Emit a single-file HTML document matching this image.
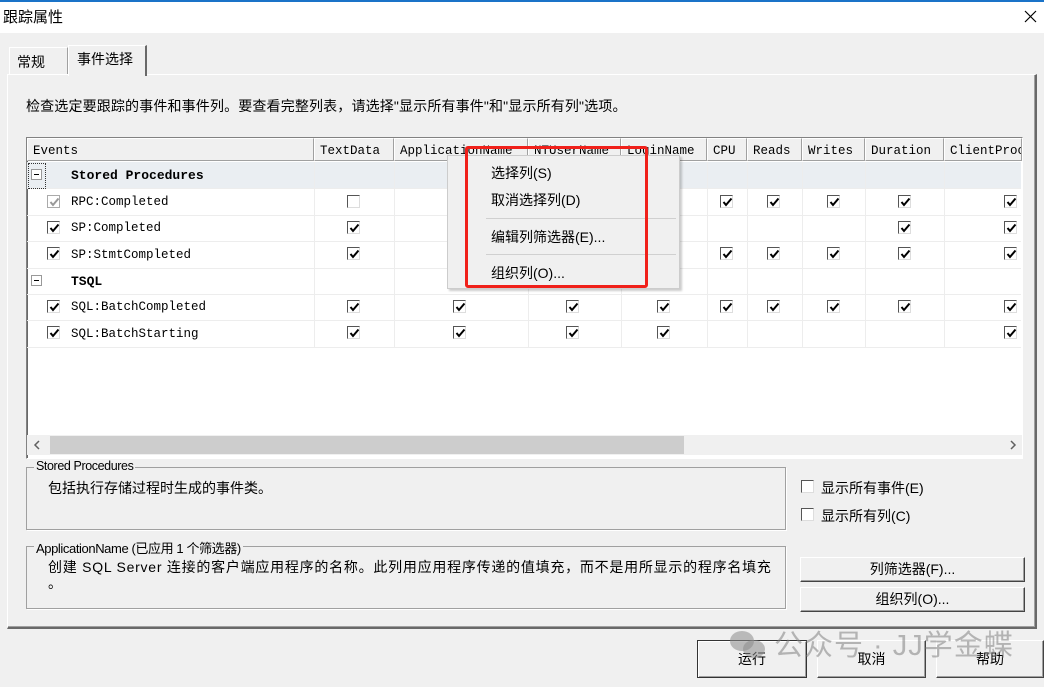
<!DOCTYPE html>
<html><head><meta charset="utf-8"><style>
*{box-sizing:border-box;margin:0;padding:0}
body{width:1044px;height:687px;background:#f0f0f0;position:relative;overflow:hidden;font-family:"Liberation Sans","Noto Sans CJK SC",sans-serif;font-size:13px;color:#000}
.a{position:absolute}
.mono{font-family:"Liberation Mono","Noto Sans CJK SC",monospace;font-size:12.5px}
.hd{position:absolute;top:138px;height:23px;background:#f0f0f0;border:1px solid #fff;border-right-color:#a0a0a0;border-bottom-color:#a0a0a0;line-height:24px;padding-left:5px;white-space:nowrap;overflow:hidden}
.cb{position:absolute;width:13px;height:13px;border:1px solid #555;border-right-color:#ddd;border-bottom-color:#ddd;background:#fff}
.cb svg{position:absolute;left:1px;top:1px}
.btn{position:absolute;background:#f0f0f0;border:1px solid #fff;border-right-color:#444;border-bottom-color:#444;box-shadow:inset -1px -1px 0 #a0a0a0;text-align:center}
.gb{position:absolute;border:1px solid #a0a0a0;box-shadow:1px 1px 0 #fff}
.hl{position:absolute;left:27px;width:994px;height:1px;background:#ededed}
.vl{position:absolute;top:162px;height:185px;width:1px;background:#ededed}
</style></head><body>
<div class="a" style="left:0;top:0;width:1044px;height:2px;background:#1a73c8"></div>
<div class="a" style="left:0;top:2px;width:1044px;height:31px;background:#fff"></div>
<div class="a" style="left:3px;top:6px;font-size:15px">跟踪属性</div>
<svg class="a" style="left:1024px;top:10px" width="13" height="13"><path d="M1 1L12 12M12 1L1 12" stroke="#000" stroke-width="1.2"/></svg>

<div class="a" style="left:9px;top:47px;width:59px;height:28px;border:1px solid #fff;border-right-color:#a0a0a0;border-bottom:none;background:#f0f0f0"></div>
<div class="a" style="left:17px;top:52px;font-size:14px">常规</div>
<div class="a" style="left:7px;top:74px;width:1030px;height:555px;border:1px solid #fff;border-right:2px solid #696969;border-bottom:2px solid #696969;box-shadow:inset -1px -1px 0 #a0a0a0"></div>
<div class="a" style="left:68px;top:45px;width:79px;height:31px;border:1px solid #fff;border-right:2px solid #696969;border-bottom:none;background:#f0f0f0"></div>
<div class="a" style="left:77px;top:49px;font-size:14px">事件选择</div>

<div class="a" style="left:26px;top:96px;font-size:14px;letter-spacing:0.15px">检查选定要跟踪的事件和事件列。要查看完整列表，请选择"显示所有事件"和"显示所有列"选项。</div>

<div class="a" style="left:26px;top:137px;width:997px;height:322px;background:#fff;border:1px solid #828282;border-right-color:#fff;border-bottom-color:#fff;box-shadow:inset 1px 1px 0 #696969"></div>
<div class="a" style="left:27px;top:162px;width:994px;height:26px;background:#eaeef2"></div>
<div class="mono">
<div class="hd" style="left:27px;width:287px">Events</div>
<div class="hd" style="left:314px;width:80px">TextData</div>
<div class="hd" style="left:394px;width:134px">ApplicationName</div>
<div class="hd" style="left:528px;width:93px">NTUserName</div>
<div class="hd" style="left:621px;width:86px">LoginName</div>
<div class="hd" style="left:707px;width:40px">CPU</div>
<div class="hd" style="left:747px;width:55px">Reads</div>
<div class="hd" style="left:802px;width:63px">Writes</div>
<div class="hd" style="left:865px;width:79px">Duration</div>
<div class="hd" style="left:944px;width:78px">ClientProc</div>
</div>
<div class="hl" style="top:188px"></div><div class="hl" style="top:215px"></div><div class="hl" style="top:241px"></div><div class="hl" style="top:268px"></div><div class="hl" style="top:294px"></div><div class="hl" style="top:320px"></div><div class="hl" style="top:347px"></div>
<div class="vl" style="left:314px"></div><div class="vl" style="left:394px"></div><div class="vl" style="left:528px"></div><div class="vl" style="left:621px"></div><div class="vl" style="left:707px"></div><div class="vl" style="left:747px"></div><div class="vl" style="left:802px"></div><div class="vl" style="left:865px"></div><div class="vl" style="left:944px"></div>

<div class="a" style="left:28px;top:163px;width:18px;height:26px;border:1px dotted #333"></div>
<div class="a" style="left:31px;top:169px;width:11px;height:11px;border:1px solid #999;background:#fff"><div class="a" style="left:2px;top:4px;width:5px;height:1px;background:#000"></div></div>
<div class="a" style="left:31px;top:275px;width:11px;height:11px;border:1px solid #999;background:#fff"><div class="a" style="left:2px;top:4px;width:5px;height:1px;background:#000"></div></div>
<div class="mono a" style="left:71px;top:168px;font-weight:bold;font-size:13px">Stored Procedures</div>
<div class="mono a" style="left:71px;top:195px">RPC:Completed</div>
<div class="mono a" style="left:71px;top:221px">SP:Completed</div>
<div class="mono a" style="left:71px;top:248px">SP:StmtCompleted</div>
<div class="mono a" style="left:71px;top:274px;font-weight:bold;font-size:13px">TSQL</div>
<div class="mono a" style="left:71px;top:300px">SQL:BatchCompleted</div>
<div class="mono a" style="left:71px;top:327px">SQL:BatchStarting</div>

<svg width="0" height="0" style="position:absolute"><defs><path id="ck" d="M1.5 5L4 8L9.5 1.5" fill="none" stroke-width="2"/></defs></svg>
<div class="cb" style="left:47px;top:195px;border-color:#aaa"><svg width="11" height="11"><use href="#ck" stroke="#999"/></svg></div>
<div class="cb" style="left:347px;top:195px"></div>
<div class="cb" style="left:720px;top:195px"><svg width="11" height="11"><use href="#ck" stroke="#000"/></svg></div>
<div class="cb" style="left:767px;top:195px"><svg width="11" height="11"><use href="#ck" stroke="#000"/></svg></div>
<div class="cb" style="left:827px;top:195px"><svg width="11" height="11"><use href="#ck" stroke="#000"/></svg></div>
<div class="cb" style="left:898px;top:195px"><svg width="11" height="11"><use href="#ck" stroke="#000"/></svg></div>
<div class="cb" style="left:1004px;top:195px"><svg width="11" height="11"><use href="#ck" stroke="#000"/></svg></div>

<div class="cb" style="left:47px;top:221px"><svg width="11" height="11"><use href="#ck" stroke="#000"/></svg></div>
<div class="cb" style="left:347px;top:221px"><svg width="11" height="11"><use href="#ck" stroke="#000"/></svg></div>
<div class="cb" style="left:898px;top:221px"><svg width="11" height="11"><use href="#ck" stroke="#000"/></svg></div>
<div class="cb" style="left:1004px;top:221px"><svg width="11" height="11"><use href="#ck" stroke="#000"/></svg></div>

<div class="cb" style="left:47px;top:247px"><svg width="11" height="11"><use href="#ck" stroke="#000"/></svg></div>
<div class="cb" style="left:347px;top:247px"><svg width="11" height="11"><use href="#ck" stroke="#000"/></svg></div>
<div class="cb" style="left:720px;top:247px"><svg width="11" height="11"><use href="#ck" stroke="#000"/></svg></div>
<div class="cb" style="left:767px;top:247px"><svg width="11" height="11"><use href="#ck" stroke="#000"/></svg></div>
<div class="cb" style="left:827px;top:247px"><svg width="11" height="11"><use href="#ck" stroke="#000"/></svg></div>
<div class="cb" style="left:898px;top:247px"><svg width="11" height="11"><use href="#ck" stroke="#000"/></svg></div>
<div class="cb" style="left:1004px;top:247px"><svg width="11" height="11"><use href="#ck" stroke="#000"/></svg></div>

<div class="cb" style="left:47px;top:300px"><svg width="11" height="11"><use href="#ck" stroke="#000"/></svg></div>
<div class="cb" style="left:347px;top:300px"><svg width="11" height="11"><use href="#ck" stroke="#000"/></svg></div>
<div class="cb" style="left:453px;top:300px"><svg width="11" height="11"><use href="#ck" stroke="#000"/></svg></div>
<div class="cb" style="left:566px;top:300px"><svg width="11" height="11"><use href="#ck" stroke="#000"/></svg></div>
<div class="cb" style="left:657px;top:300px"><svg width="11" height="11"><use href="#ck" stroke="#000"/></svg></div>
<div class="cb" style="left:720px;top:300px"><svg width="11" height="11"><use href="#ck" stroke="#000"/></svg></div>
<div class="cb" style="left:767px;top:300px"><svg width="11" height="11"><use href="#ck" stroke="#000"/></svg></div>
<div class="cb" style="left:827px;top:300px"><svg width="11" height="11"><use href="#ck" stroke="#000"/></svg></div>
<div class="cb" style="left:898px;top:300px"><svg width="11" height="11"><use href="#ck" stroke="#000"/></svg></div>
<div class="cb" style="left:1004px;top:300px"><svg width="11" height="11"><use href="#ck" stroke="#000"/></svg></div>

<div class="cb" style="left:47px;top:326px"><svg width="11" height="11"><use href="#ck" stroke="#000"/></svg></div>
<div class="cb" style="left:347px;top:326px"><svg width="11" height="11"><use href="#ck" stroke="#000"/></svg></div>
<div class="cb" style="left:453px;top:326px"><svg width="11" height="11"><use href="#ck" stroke="#000"/></svg></div>
<div class="cb" style="left:566px;top:326px"><svg width="11" height="11"><use href="#ck" stroke="#000"/></svg></div>
<div class="cb" style="left:657px;top:326px"><svg width="11" height="11"><use href="#ck" stroke="#000"/></svg></div>
<div class="cb" style="left:1004px;top:326px"><svg width="11" height="11"><use href="#ck" stroke="#000"/></svg></div>

<div class="a" style="left:27px;top:435px;width:995px;height:20px;background:#f0f0f0"></div>
<div class="a" style="left:50px;top:436px;width:634px;height:18px;background:#cdcdcd"></div>
<svg class="a" style="left:33px;top:440px" width="8" height="10"><path d="M6 1L2 5L6 9" fill="none" stroke="#606060" stroke-width="1.5"/></svg>
<svg class="a" style="left:1009px;top:440px" width="8" height="10"><path d="M2 1L6 5L2 9" fill="none" stroke="#606060" stroke-width="1.5"/></svg>

<div class="a" style="left:447px;top:155px;width:233px;height:134px;background:#f0f0f0;border:1px solid #ccc;box-shadow:2px 2px 2px rgba(0,0,0,.2)"></div>
<div class="a" style="left:491px;top:163px;font-size:14px">选择列(S)</div>
<div class="a" style="left:491px;top:190px;font-size:14px">取消选择列(D)</div>
<div class="a" style="left:486px;top:218px;width:190px;height:1px;background:#d0d0d0"></div>
<div class="a" style="left:491px;top:227px;font-size:14px">编辑列筛选器(E)...</div>
<div class="a" style="left:486px;top:254px;width:190px;height:1px;background:#d0d0d0"></div>
<div class="a" style="left:491px;top:263px;font-size:14px">组织列(O)...</div>
<div class="a" style="left:465px;top:146px;width:183px;height:142px;border:3px solid #f0201a;border-radius:3px"></div>

<div class="gb" style="left:26px;top:467px;width:760px;height:63px"></div>
<div class="a" style="left:34px;top:459px;background:#f0f0f0;padding:0 2px;font-size:12.5px;letter-spacing:-0.4px">Stored Procedures</div>
<div class="a" style="left:48px;top:478px;font-size:14px">包括执行存储过程时生成的事件类。</div>
<div class="gb" style="left:26px;top:546px;width:760px;height:63px"></div>
<div class="a" style="left:34px;top:538px;background:#f0f0f0;padding:0 2px;font-size:13px;letter-spacing:-0.4px">ApplicationName (已应用 1 个筛选器)</div>
<div class="a" style="left:48px;top:557px;font-size:14px;letter-spacing:0.75px;white-space:nowrap">创建 SQL Server 连接的客户端应用程序的名称。此列用应用程序传递的值填充，而不是用所显示的程序名填充</div>
<div class="a" style="left:48px;top:573px;font-size:14px">。</div>

<div class="cb" style="left:801px;top:480px"></div>
<div class="a" style="left:821px;top:478px;font-size:14px">显示所有事件(E)</div>
<div class="cb" style="left:801px;top:508px"></div>
<div class="a" style="left:821px;top:506px;font-size:14px">显示所有列(C)</div>

<div class="btn" style="left:800px;top:557px;width:225px;height:25px;line-height:23px;font-size:14px">列筛选器(F)...</div>
<div class="btn" style="left:800px;top:587px;width:225px;height:25px;line-height:23px;font-size:14px">组织列(O)...</div>

<div class="btn" style="left:697px;top:640px;width:110px;height:38px;line-height:36px;font-size:14px;border:1px solid #333;box-shadow:inset 1px 1px 0 #fff,inset -1px -1px 0 #a0a0a0">运行</div>
<div class="btn" style="left:817px;top:640px;width:109px;height:38px;line-height:36px;font-size:14px">取消</div>
<div class="btn" style="left:936px;top:640px;width:108px;height:38px;line-height:36px;font-size:14px">帮助</div>

<svg class="a" style="left:728px;top:628px" width="40" height="34"><ellipse cx="14" cy="13" rx="12" ry="10" fill="rgba(140,140,140,.55)"/><ellipse cx="26" cy="21" rx="11" ry="9" fill="rgba(140,140,140,.55)"/></svg>
<div class="a" style="left:774px;top:622px;font-size:29px;color:rgba(130,130,130,.55);letter-spacing:1px">公众号 · JJ学金蝶</div>
</body></html>
